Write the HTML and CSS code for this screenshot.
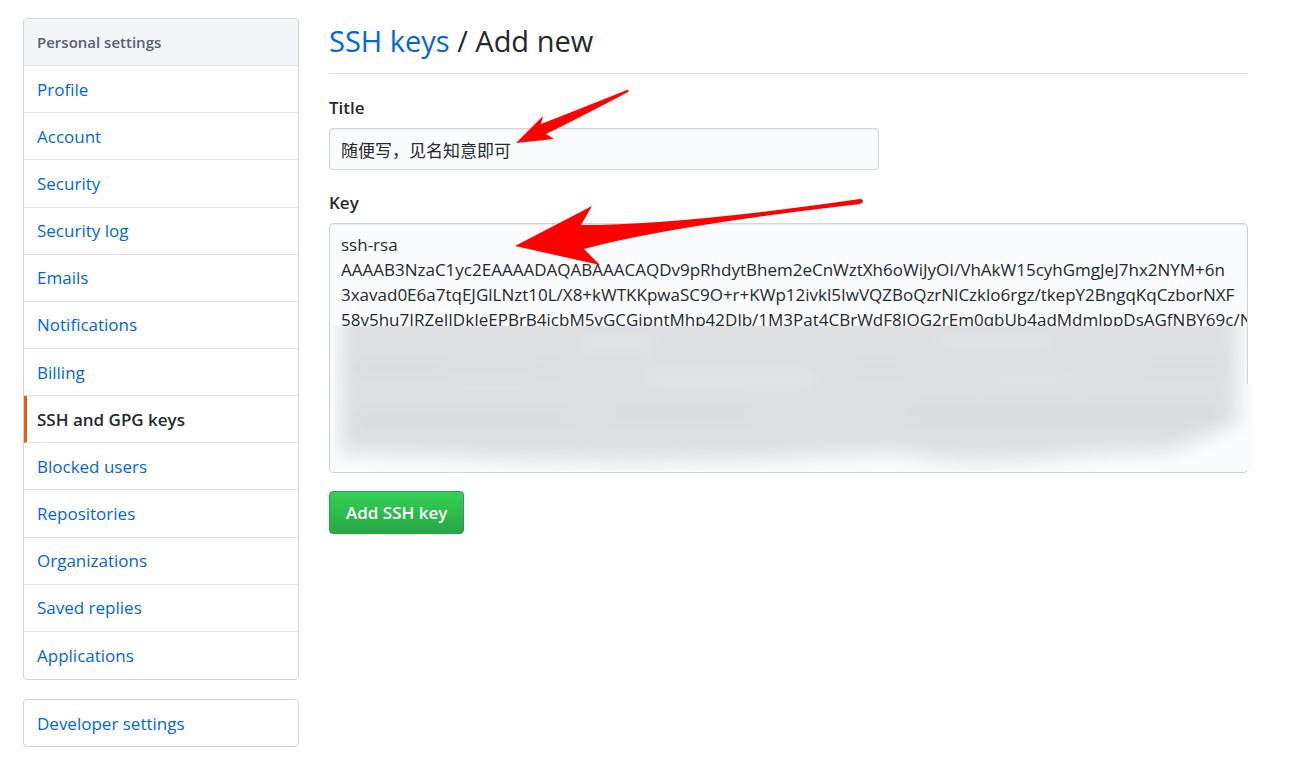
FILE: index.html
```html
<!DOCTYPE html>
<html lang="en">
<head>
<meta charset="utf-8">
<meta name="viewport" content="width=device-width, initial-scale=1">
<title>Add new SSH key</title>
<link rel="stylesheet" href="styles.css">
</head>
<body>
<div class="page">
  <aside class="sidebar">
    <nav class="menu menu-main" aria-label="Personal settings">
      <h2 class="menu-heading">Personal settings</h2>
      <a class="menu-item" href="#profile">Profile</a>
      <a class="menu-item" href="#account">Account</a>
      <a class="menu-item" href="#security">Security</a>
      <a class="menu-item" href="#security-log">Security log</a>
      <a class="menu-item" href="#emails">Emails</a>
      <a class="menu-item" href="#notifications">Notifications</a>
      <a class="menu-item" href="#billing">Billing</a>
      <a class="menu-item selected" href="#keys" aria-current="page">SSH and GPG keys</a>
      <a class="menu-item" href="#blocked">Blocked users</a>
      <a class="menu-item" href="#repositories">Repositories</a>
      <a class="menu-item" href="#organizations">Organizations</a>
      <a class="menu-item" href="#replies">Saved replies</a>
      <a class="menu-item" href="#applications">Applications</a>
    </nav>
    <nav class="menu" aria-label="Developer">
      <a class="menu-item" href="#developer">Developer settings</a>
    </nav>
  </aside>
  <main class="content">
    <h1 class="subhead"><a href="#keys">SSH keys</a> / Add new</h1>
    <form class="key-form">
      <div class="field">
        <label for="title">Title</label>
        <div class="control control-title">
          <input id="title" type="text" value="随便写，见名知意即可">
          <svg class="arrow arrow-title" viewBox="0 0 116 56" aria-hidden="true"><path d="M1 54 28 27 26 35Q52 25 112 1Q115 1 113 3Q62 30 31 45L39 50Z"/></svg>
        </div>
      </div>
      <div class="field">
        <label for="key">Key</label>
        <div class="control">
          <textarea id="key" spellcheck="false">ssh-rsa
AAAAB3NzaC1yc2EAAAADAQABAAACAQDv9pRhdytBhem2eCnWztXh6oWiJyOI/VhAkW15cyhGmgJeJ7hx2NYM+6n
3xavad0E6a7tqEJGlLNzt10L/X8+kWTKKpwaSC9O+r+KWp12ivkl5IwVQZBoQzrNlCzklo6rgz/tkepY2BngqKqCzborNXF
58v5hu7IRZeJJDkJeEPBrB4icbM5vGCGipntMhp42Dlb/1M3Pat4CBrWdF8IQG2rEm0qbUb4adMdmlppDsAGfNBY69c/N</textarea>
          <svg class="redaction" viewBox="0 0 918 144" preserveAspectRatio="none" aria-hidden="true">
            <defs>
              <filter id="soft" x="-10%" y="-50%" width="120%" height="200%"><feGaussianBlur stdDeviation="9"/></filter>
              <clipPath id="patch"><path d="M0 0H911V58H918V144H0Z"/></clipPath>
            </defs>
            <g clip-path="url(#patch)">
              <path fill="#fafbfc" d="M0 0H918V144H0Z"/>
              <g filter="url(#soft)">
                <path fill="#dfe0e2" d="M7-40H904V96L840 124 640 136 560 128 300 136 7 128Z"/>
                <path fill="#d9dadc" d="M15 34H230V50H15ZM510 32H580V47H510ZM800 32H895V47H800ZM15 82H240V100H15ZM270 80H420V98H270ZM570 78H890V98H570Z"/>
                <path fill="#e3e4e6" d="M110 50H200V60H110ZM245 10H320V25H245ZM600 10H720V20H600ZM310 45H480V60H310ZM650 48H740V56H650Z"/>
              </g>
            </g>
          </svg>
          <svg class="arrow arrow-key" viewBox="0 0 352 70" aria-hidden="true"><path d="M1 49 78 9 67 28Q165 28 346 2Q349 2 349 4Q349 6 346 7Q155 29 70 52L86 68Z"/></svg>
        </div>
      </div>
      <button class="submit" type="submit">Add SSH key</button>
    </form>
  </main>
</div>
</body>
</html>
```
FILE: styles.css
```css
* { box-sizing: border-box; }

body {
  margin: 0;
  background: #fff;
  color: #24292e;
  font: 17px/25px "Open Sans", "Noto Sans CJK SC", sans-serif;
}

a { color: #0366d6; text-decoration: none; }

.page {
  display: flex;
  gap: 30px;
  padding: 18px 57px 20px 23px;
}

.sidebar {
  flex: 0 0 276px;
  display: flex;
  flex-direction: column;
  gap: 19px;
}

.menu {
  display: grid;
  grid-auto-rows: 1fr;
  min-height: 48px;
  overflow: hidden;
  border: 1px solid #d1d5da;
  border-radius: 4px;
}

.menu-main { min-height: 662px; }

.menu-heading,
.menu-item {
  display: flex;
  align-items: center;
  margin: 0;
  padding: 0 13px;
  border-bottom: 1px solid #e1e4e8;
}

.menu-item:last-child { border-bottom: 0; }

.menu-heading {
  background: #f3f5f8;
  color: #586069;
  font-size: 15px;
  font-weight: 600;
}

.selected {
  padding-left: 10px;
  border-left: 3px solid #e36209;
  color: #24292e;
  font-weight: 600;
}

.content { flex: 1; min-width: 0; }

.subhead {
  margin: 0 0 21px;
  padding: 3px 0 12px;
  border-bottom: 1px solid #e1e4e8;
  font-size: 29px;
  font-weight: 400;
  line-height: 40px;
}

.field { margin-bottom: 18px; }
.field + .field { margin-top: 20px; }

.field label {
  display: block;
  margin-bottom: 8px;
  font-weight: 600;
}

.control { position: relative; }
.control-title { max-width: 550px; }

.control input,
.control textarea {
  display: block;
  width: 100%;
  margin: 0;
  padding: 8px 11px;
  border: 1px solid #d1d5da;
  border-radius: 4px;
  background: #fafbfc;
  box-shadow: inset 0 1px 2px rgba(27, 31, 35, 0.08);
  color: #24292e;
  font: inherit;
  outline: 0;
}

.control input { height: 42px; }

.control textarea {
  height: 250px;
  overflow: hidden;
  resize: none;
  white-space: pre;
}

.arrow {
  position: absolute;
  fill: #f00;
  pointer-events: none;
}

.arrow-title { left: 186px; top: -39px; width: 116px; height: 56px; }
.arrow-key { left: 185px; top: -26px; width: 352px; height: 70px; }

.redaction {
  position: absolute;
  left: 5px;
  top: 103px;
  width: calc(100% - 1px);
  height: 144px;
  pointer-events: none;
}

.submit {
  height: 43px;
  padding: 0 16px;
  border: 1px solid #28a044;
  border-radius: 4px;
  background: linear-gradient(#34d058, #28a745);
  color: #fff;
  font: inherit;
  font-weight: 600;
}
```
